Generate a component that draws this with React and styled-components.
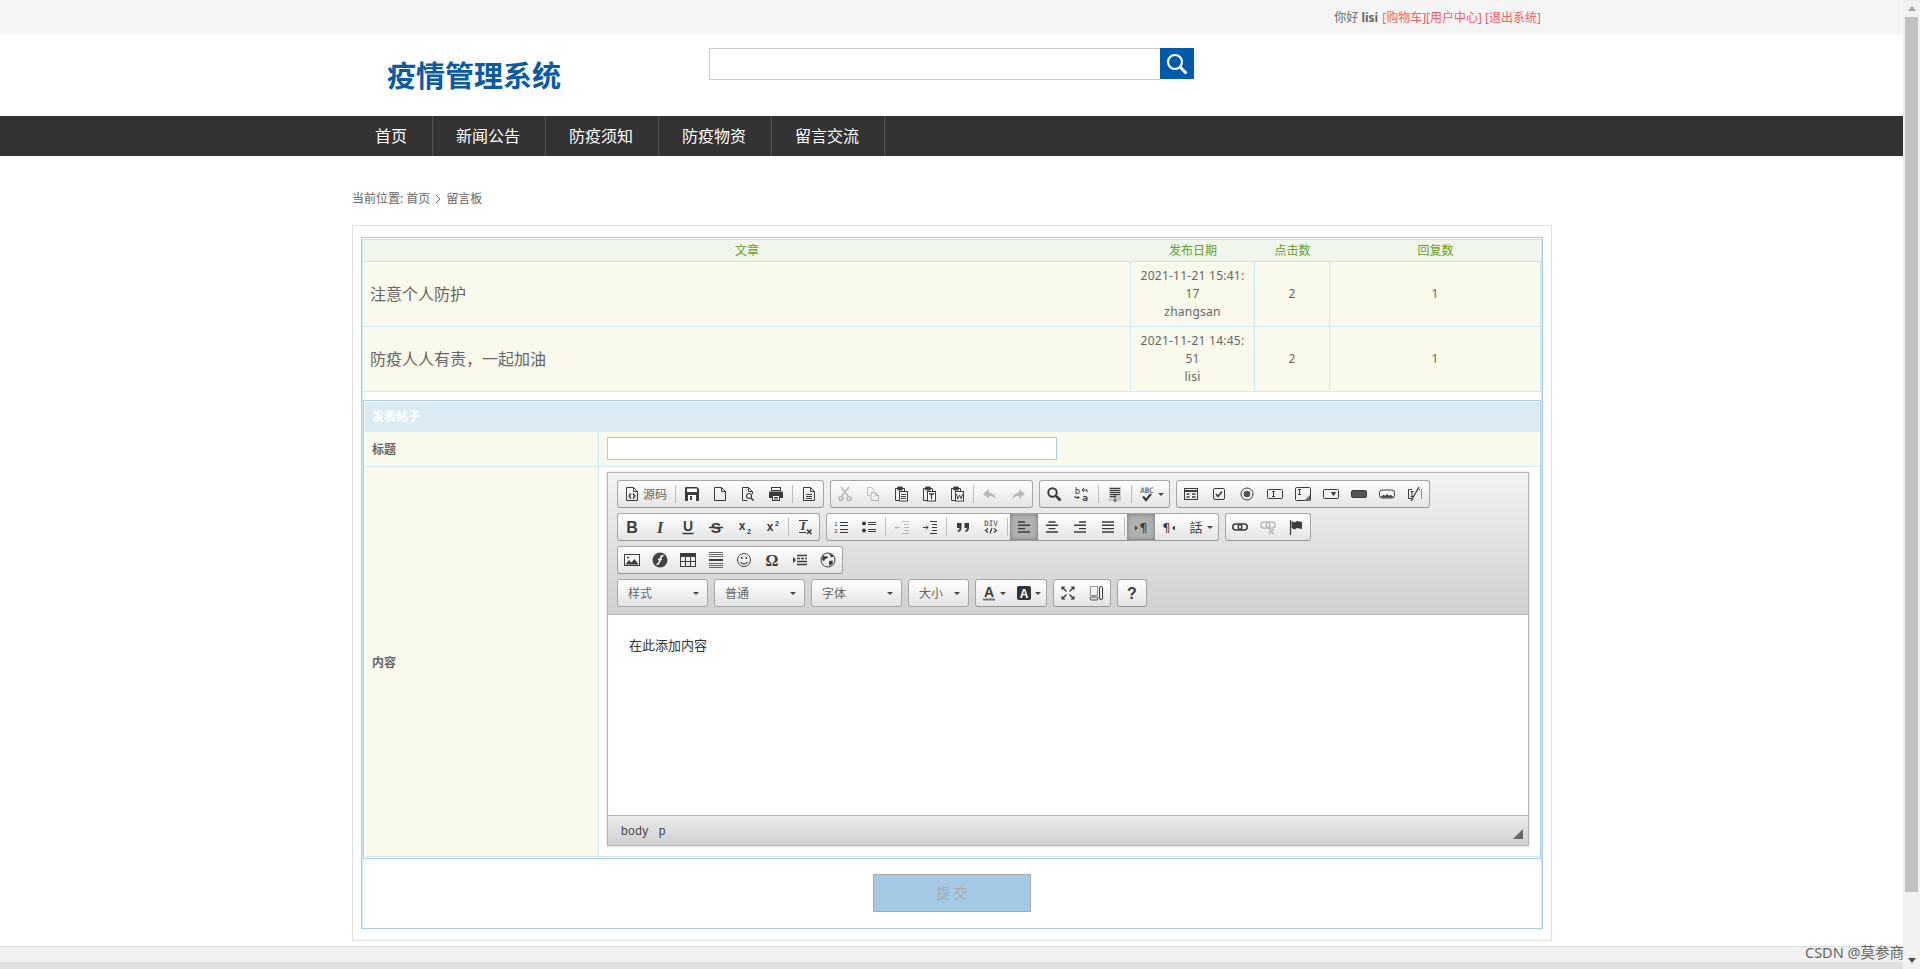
import styled, { createGlobalStyle } from "styled-components"

const GlobalStyle = createGlobalStyle`
  * {
    box-sizing: border-box;
  }
  html, body {
    margin: 0;
    padding: 0;
    height: 100%;
    overflow: hidden;
    background: #fff;
    font-family: "Noto Sans", "Noto Sans CJK SC", sans-serif;
    font-size: 12px;
    color: #666;
  }
`

const Screen = styled.div`
  position: relative;
  display: flex;
  width: 1920px;
  height: 969px;
  overflow: hidden;
`
const Page = styled.div`
  width: 1903px;
  height: 969px;
  display: flex;
  flex-direction: column;
`
const Scrollbar = styled.div`
  width: 17px;
  height: 969px;
  background: #f1f1f1;
  display: flex;
  flex-direction: column;
  align-items: center;
`
const ScrollUp = styled.div`
  height: 17px;
  display: flex;
  align-items: center;
  justify-content: center;
  &::before {
    content: "";
    border: 4px solid transparent;
    border-top: 0;
    border-bottom: 5px solid #a3a3a3;
  }
`
const ScrollThumb = styled.div`
  width: 13px;
  height: 875px;
  background: #c1c1c1;
`
const ScrollDown = styled.div`
  margin-top: auto;
  height: 17px;
  display: flex;
  align-items: center;
  justify-content: center;
  &::before {
    content: "";
    border: 4px solid transparent;
    border-bottom: 0;
    border-top: 5px solid #505050;
  }
`
const Watermark = styled.div`
  position: absolute;
  left: 1805px;
  top: 942px;
  font-size: 14.5px;
  line-height: 20px;
  color: #666;
  white-space: nowrap;
`

const TopBar = styled.div`
  height: 34px;
  background: #f5f5f5;
`
const Wrap = styled.div`
  width: 1200px;
  margin-left: 352px;
`
const TopLinks = styled(Wrap)`
  height: 34px;
  padding-right: 11px;
  display: flex;
  justify-content: flex-end;
  align-items: center;
  gap: 4px;
  font-size: 12px;
  b {
    font-weight: 700;
  }
`
const RedLinks = styled.span`
  color: #ff5a60;
`

const Header = styled(Wrap)`
  height: 82px;
  display: flex;
  align-items: flex-start;
`
const Logo = styled.div`
  width: 357px;
  padding: 22px 0 0 35px;
  font-size: 29px;
  line-height: 40px;
  font-weight: 700;
  color: #0b5aa6;
  white-space: nowrap;
`
const SearchInput = styled.div`
  width: 451px;
  height: 32px;
  margin-top: 14px;
  border: 1px solid #ccc;
  border-right: 0;
`
const SearchButton = styled.div`
  width: 34px;
  height: 31px;
  margin-top: 14px;
  background: #0059ab;
  display: flex;
  align-items: center;
  justify-content: center;
`

const NavBar = styled.div`
  height: 40px;
  background: #333;
`
const NavList = styled(Wrap)`
  display: flex;
`
const NavItem = styled.div`
  height: 40px;
  padding: 0 25px 0 23px;
  border-right: 1px solid #555;
  color: #fff;
  font-size: 16px;
  line-height: 40px;
`

const Crumb = styled(Wrap)`
  height: 69px;
  padding-top: 34px;
  font-size: 12px;
  line-height: 18px;
  color: #666;
  display: flex;
  align-items: flex-start;
  svg {
    margin: 4px 5px 0 5px;
  }
`

const Panel = styled(Wrap)`
  height: 716px;
  border: 1px solid #e0e0e0;
  padding: 11px 8px;
`
const OuterBox = styled.div`
  width: 1182px;
  height: 692px;
  border: 1px solid #a8cce6;
  padding: 1px;
  box-shadow: inset 1px 0 0 #cfe9f5, inset -1px 0 0 #cfe9f5;
`
const DataTable = styled.table`
  width: 1178px;
  table-layout: fixed;
  border-collapse: separate;
  border-spacing: 0;
  border-top: 1px solid #bfe0f0;
  display: block;
`
const HeadCell = styled.th`
  height: 22px;
  padding: 0 0 1px;
  width: ${(p) => p.$w}px;
  background: #f0f6ec;
  border-bottom: 1px solid #d8e6c8;
  color: #66a01e;
  font-size: 12px;
  font-weight: 400;
  text-align: center;
`
const Cell = styled.td`
  height: 65px;
  padding: 0;
  background: #f9f9ec;
  border-bottom: 1px solid #cfe9f5;
  border-right: 1px solid #cfe9f5;
  font-size: 12px;
  line-height: 18px;
  letter-spacing: 0.25px;
  color: #666;
  text-align: center;
`
const TitleCell = styled(Cell)`
  padding-left: 7px;
  text-align: left;
  font-size: 16px;
  line-height: 24px;
  letter-spacing: 0;
`

const FormBox = styled.div`
  width: 1178px;
  margin-top: 8px;
  border: 1px solid #a8cce6;
  padding: 1px;
`
const FormHead = styled.div`
  height: 30px;
  background: #dcebf3;
  color: #fff;
  font-weight: 700;
  font-size: 12px;
  line-height: 30px;
  padding-left: 7px;
`
const FormRow = styled.div`
  display: grid;
  grid-template-columns: 234px 940px;
  height: ${(p) => p.$h}px;
  border-bottom: 1px solid #cfe9f5;
`
const FormLabel = styled.div`
  background: #f9f9ec;
  border-right: 1px solid #cfe9f5;
  padding-left: 7px;
  display: flex;
  align-items: center;
  font-weight: 700;
  font-size: 12px;
  color: #666;
`
const FormValue = styled.div`
  padding: 5px 8px 0;
  background: ${(p) => (p.$plain ? "#fff" : "#f9f9ec")};
`
const TitleInput = styled.div`
  width: 450px;
  height: 23px;
  background: #fff;
  border: 1px solid #a8cce6;
`

const Editor = styled.div`
  width: 922px;
  height: 374px;
  border: 1px solid #b6b6b6;
  box-shadow: 0 0 3px rgba(0, 0, 0, 0.15);
  display: flex;
  flex-direction: column;
  background: #fff;
`
const Toolbar = styled.div`
  height: 142px;
  padding: 7px 9px;
  border-bottom: 1px solid #b6b6b6;
  background: linear-gradient(#f2f2f2, #cfd1cf);
  display: flex;
  flex-direction: column;
  gap: 5px;
`
const ToolRow = styled.div`
  display: flex;
  gap: 6px;
  height: 28px;
`
const Group = styled.div`
  display: flex;
  height: 28px;
  border: 1px solid #a6a6a6;
  border-bottom-color: #979797;
  border-radius: 3px;
  background: linear-gradient(#fff, #e4e4e4);
  overflow: hidden;
`
const ToolButton = styled.div`
  width: ${(p) => p.$w || 28}px;
  height: 26px;
  display: flex;
  align-items: center;
  justify-content: center;
  gap: 3px;
  flex: none;
  font-size: 12px;
  color: #666;
  svg {
    opacity: ${(p) => (p.$off ? 0.3 : 1)};
  }
  ${(p) => p.$on && "background: #b0b0b0; box-shadow: inset 0 0 4px #6f6f6f;"}
`
const Arrow = styled.span`
  flex: none;
  border: 3px solid transparent;
  border-bottom: 0;
  border-top: 3px solid #474747;
`
const Sep = styled.span`
  width: 1px;
  height: 18px;
  margin: 4px 2px;
  background: #bcbcbc;
  flex: none;
`
const Combo = styled.div`
  width: ${(p) => p.$w}px;
  height: 28px;
  padding: 0 8px 0 10px;
  border: 1px solid #a6a6a6;
  border-radius: 3px;
  background: linear-gradient(#fff, #e4e4e4);
  display: flex;
  align-items: center;
  justify-content: space-between;
  font-size: 12px;
  color: #666;
`
const EditArea = styled.div`
  height: 201px;
  padding: 21px 0 0 21px;
  font-size: 13px;
  line-height: 18px;
  color: #333;
  border-bottom: 1px solid #b6b6b6;
`
const StatusBar = styled.div`
  height: 29px;
  flex: none;
  padding: 0 5px 0 13px;
  background: linear-gradient(#ebebeb, #cfd1cf);
  display: flex;
  align-items: center;
  gap: 10px;
  font-family: "Liberation Sans", sans-serif;
  font-size: 12px;
  letter-spacing: 0.4px;
  color: #484848;
`
const Resize = styled.span`
  margin: 7px 0 0 auto;
  width: 0;
  height: 0;
  border-left: 10px solid transparent;
  border-bottom: 10px solid #666;
`

const SubmitRow = styled.div`
  display: flex;
  justify-content: center;
  padding-top: 15px;
`
const Submit = styled.div`
  width: 158px;
  height: 38px;
  background: #a4cae6;
  border: 1px solid #aaa;
  color: #aaa;
  font-size: 14px;
  line-height: 36px;
  text-align: center;
`

const Footer = styled.div`
  margin-top: 5px;
  flex: 1;
  border-top: 1px solid #ddd;
  background: #f1f1f1;
  &::after {
    content: "";
    display: block;
    margin-top: 15px;
    height: 7px;
    background: #e0e0e0;
  }
`

const Svg = styled.svg.attrs({ viewBox: "0 0 16 16" })`
  width: 16px;
  height: 16px;
  flex: none;
  fill: none;
  stroke: #3c3c3c;
  stroke-width: 1;
  overflow: visible;
  text {
    stroke: none;
    fill: #3c3c3c;
  }
`

const dark = "#3c3c3c"
const Doc = () => <path d="M2.5 1.5h7l4 4v9h-11zM9.5 1.5v4h4" />
const Clip = ({ children }) => (
  <>
    <path d="M5 2.5H2.5v12H6M9 2.5h2.5V5" />
    <rect x="4.5" y="1" width="5" height="3" rx="1" fill={dark} />
    <rect x="6.5" y="5.5" width="8" height="9.5" fill="#fff" />
    {children}
  </>
)
const Small = ({ x = 8, y = 13, size = 7, weight = 700, family = "Liberation Sans", style, children }) => (
  <text x={x} y={y} fontSize={size} fontWeight={weight} fontFamily={family} fontStyle={style} textAnchor="middle">
    {children}
  </text>
)

const icons = {
  source: <><Doc /><path d="M7 7.5L5 10l2 2.5M9 7.5l2 2.5-2 2.5" strokeWidth="1.3" /></>,
  save: <><path fill={dark} d="M1 2a1 1 0 0 1 1-1h11l2 2v11a1 1 0 0 1-1 1H2a1 1 0 0 1-1-1z" stroke="none" /><rect x="3" y="2.5" width="10" height="3.5" fill="#fff" stroke="none" /><rect x="4" y="9" width="8" height="6" fill="#fff" stroke="none" /><rect x="6" y="10" width="2" height="4" fill={dark} stroke="none" /></>,
  newpage: <Doc />,
  preview: <><path d="M12.5 8V5.5h-4v-4M12.5 5.5l-4-4h-6v13h5" /><circle cx="9" cy="10" r="2.5" strokeWidth="1.2" /><path d="M11 12l2.5 2.5" strokeWidth="1.6" /></>,
  print: <><rect x="3.5" y="1.5" width="9" height="3" /><path fill={dark} stroke="none" d="M1 5.5h14V12h-3V9.5H4V12H1z" /><rect x="4.5" y="9.5" width="7" height="5" fill="#fff" /><path d="M6 11.5h4M6 13h4" /></>,
  templates: <><Doc /><path d="M5 8.5h6M5 10.5h6M5 12.5h6" /></>,
  cut: <><path d="M4 1l7 9M12 1l-7 9" strokeWidth="1.8" /><circle cx="4" cy="12.5" r="2" strokeWidth="1.6" /><circle cx="12" cy="12.5" r="2" strokeWidth="1.6" /></>,
  copy: <><path d="M2.5 1.5h4l2 2v2M2.5 1.5v8h3" /><path d="M6 6.5h4.5l3 3v5H6zM10.5 6.5v3h3" /></>,
  paste: <Clip><path d="M8 8.5h5M8 10.5h5M8 12.5h5" /></Clip>,
  pastetext: <Clip><path d="M8 8h5M10.5 8v5.5" strokeWidth="1.3" /></Clip>,
  pasteword: <Clip><path d="M7.5 8l1.2 5 1.8-4 1.8 4 1.2-5" /></Clip>,
  undo: <path fill={dark} stroke="none" d="M7 3L1 8l6 5v-3c3 0 5 1 7 3-1-4-3-6-7-6.5z" />,
  redo: <path fill={dark} stroke="none" d="M9 3l6 5-6 5v-3c-3 0-5 1-7 3 1-4 3-6 7-6.5z" />,
  find: <><circle cx="6.5" cy="6.5" r="4.2" strokeWidth="2" /><path d="M10 10l4.5 4.5" strokeWidth="2.6" /></>,
  replace: <><Small x="3.5" y="8" size="9" weight="400" family="DejaVu Sans Mono">b</Small><Small x="11" y="14.5" size="9.5" weight="700" family="DejaVu Sans Mono">a</Small><path d="M8 4l2-2M8 4l2 2M8 4h5v2M1 10v1.5h4M5 11.5l-1.5-1.5M5 11.5L3.5 13" /></>,
  selectall: <><rect x="2" y="1" width="12" height="14" fill="#c9c9c9" stroke="none" /><path d="M3 2.5h10M3 4.5h10M3 6.5h10M3 8.5h10M3 10.5h5" strokeWidth="1.1" /><path d="M8 10v5M6.5 10h3M6.5 15h3" /></>,
  spell: <><Small x="8" y="7" size="7.5" weight="400" family="DejaVu Sans Mono">ABC</Small><path d="M4 10.5l3 3.5 5-6" strokeWidth="2.2" /></>,
  form: <><rect x="1.5" y="2.5" width="13" height="11" /><path d="M2 5h12" strokeWidth="2" /><path d="M3.5 8h3M3.5 11h3M9 8h3.5M9 11h3.5" strokeWidth="1.3" /></>,
  checkbox: <><rect x="2.5" y="2.5" width="11" height="11" rx="1.5" /><path d="M5 8l2 2.5L11 5.5" strokeWidth="1.6" /></>,
  radio: <><circle cx="8" cy="8" r="6" /><circle cx="8" cy="8" r="3.3" fill="#555" stroke="none" /></>,
  textfield: <><rect x="0.5" y="3.5" width="15" height="9" rx="1" /><path d="M5 5.5h3M5 10.5h3M6.5 5.5v5" /></>,
  textarea: <><rect x="0.5" y="1.5" width="15" height="13" rx="1" /><path d="M3 3.5h3M3 8.5h3M4.5 3.5v5" /><path d="M15 9v6H9z" fill="#666" stroke="none" /></>,
  select: <><rect x="0.5" y="3.5" width="15" height="9" rx="1" /><path d="M8.5 6.5h4l-2 3z" fill={dark} /></>,
  button: <rect x="0.5" y="4.5" width="15" height="7" rx="1.5" fill="#555" />,
  imagebutton: <><rect x="0.5" y="4" width="15" height="8" rx="2.5" /><path d="M2.5 11l2-2 1.5 1.5L8 8.5l2 2 1.5-1.5 2 2z" fill={dark} /></>,
  hiddenfield: <><path d="M5 3.5H1.5v9H6M3.5 5.5h3M3.5 10.5h3M5 5.5v5" /><path d="M4 15l8-14" strokeWidth="1.3" /><path d="M14.5 3.5v9M10 3.5h4" strokeDasharray="1 1" /></>,
  bold: <Small y="14" size="16" family="Liberation Sans">B</Small>,
  italic: <Small y="14" size="16" style="italic" family="Liberation Serif">I</Small>,
  underline: <><Small y="11.5" size="14" family="Liberation Sans">U</Small><path d="M2.5 14.5h11" strokeWidth="1.5" /></>,
  strike: <><Small y="13.5" size="15.5" family="Liberation Sans">S</Small><path d="M1 8.5h14" strokeWidth="1.3" /></>,
  sub: <><Small x="6" y="11" size="12">x</Small><Small x="13" y="15" size="7">2</Small></>,
  sup: <><Small x="6" y="12" size="12">x</Small><Small x="13" y="7" size="7">2</Small></>,
  clear: <><Small x="6" y="11" size="13" style="italic" family="Liberation Serif">I</Small><path d="M2 1.5h9M2 13.5h7" strokeWidth="1.2" /><path d="M10 10.5l4.5 4.5M14.5 10.5L10 15" strokeWidth="1.5" /></>,
  numlist: <><Small x="3" y="7" size="6" weight="400">1</Small><Small x="3" y="14" size="6" weight="400">2</Small><path d="M7 3.5h8M7 6.5h8M7 10.5h8M7 13.5h8" /></>,
  bullet: <><circle cx="3" cy="4.5" r="2" fill={dark} stroke="none" /><circle cx="3" cy="11.5" r="2" fill={dark} stroke="none" /><path d="M7 3.5h8M7 5.5h8M7 10.5h8M7 12.5h8" /></>,
  outdent: <><path d="M8 2.5h7M10 5.5h5M10 8.5h5M10 11.5h5M8 14.5h7" /><path d="M6 8.5H1M3 6.5l-2 2 2 2" /></>,
  indent: <><path d="M8 2.5h7M10 5.5h5M10 8.5h5M10 11.5h5M8 14.5h7" /><path d="M1 8.5h5M4 6.5l2 2-2 2" /></>,
  quote: <path fill={dark} stroke="none" d="M2 4h4.5v4.5c0 2.5-1 4-3.5 4.5l-.5-1.2C4 11.3 4.5 10.500 4.500 9H2zM9.500 4H14v4.500c0 2.500-1 4-3.500 4.500l-.5-1.200c1.500-.5 2-1.300 2-2.800H9.500z" />,
  div: <><Small x="8" y="7" size="7.5" weight="400" family="DejaVu Sans Mono">DIV</Small><path d="M5 9.500l-2.500 2 2.500 2M11 9.500l2.500 2-2.500 2M9 9l-2 5.500" strokeWidth="1.2" /></>,
  left: <path d="M2 3h7M2 6.300h12M2 9.600h7M2 13h12" strokeWidth="1.4" />,
  center: <path d="M4.500 3h7M2 6.300h12M4.500 9.600h7M2 13h12" strokeWidth="1.4" />,
  right: <path d="M7 3h7M2 6.300h12M7 9.600h7M2 13h12" strokeWidth="1.4" />,
  justify: <path d="M2 3h12M2 6.300h12M2 9.600h12M2 13h12" strokeWidth="1.4" />,
  ltr: <><Small x="10.500" y="13" size="13" weight="400" family="DejaVu Sans">¶</Small><path d="M2 6.500l3 2.500-3 2.500z" fill={dark} stroke="none" /></>,
  rtl: <><Small x="5.500" y="13" size="13" weight="400" family="DejaVu Sans">¶</Small><path d="M14 6.500L11 9l3 2.500z" fill={dark} stroke="none" /></>,
  lang: <Small x="8" y="12.500" size="13" weight="400" family="Noto Sans CJK TC">話</Small>,
  link: <><rect x="0.800" y="5" width="9" height="6" rx="3" strokeWidth="1.5" /><rect x="6.200" y="5" width="9" height="6" rx="3" strokeWidth="1.5" /></>,
  unlink: <><rect x="0.800" y="3" width="9" height="6" rx="3" strokeWidth="1.5" /><rect x="6.200" y="3" width="9" height="6" rx="3" strokeWidth="1.5" /><path d="M9 10l5 5M14 10l-5 5" strokeWidth="1.5" /></>,
  anchor: <><path d="M2.500 1v15" strokeWidth="1.2" /><path d="M3.500 2l3 1.500L9 2l5 1v7l-5-1-2.500 1.500-3-1.500z" fill={dark} stroke="none" /></>,
  image: <><rect x="0.500" y="2.500" width="15" height="11" /><path d="M1.500 12.500L5 8l2.500 2.500L10.500 7l4 5.500z" fill={dark} stroke="none" /><circle cx="4" cy="5.500" r="1" fill={dark} stroke="none" /></>,
  flash: <><circle cx="8" cy="8" r="7.500" fill="#444" stroke="none" /><path d="M11.500 3.500C8.500 3.500 8.500 6 8 8s-1 4.500-3.500 4.500M6 7.500h4" stroke="#fff" strokeWidth="1.5" /></>,
  table: <><rect x="0.500" y="1.500" width="15" height="13" /><path d="M1 2h14v3H1z" fill={dark} stroke="none" /><path d="M5.500 5v9M10.500 5v9M1 9.500h14" /></>,
  hr: <><path d="M1 0.500h14M1 2.500h14M1 4.500h14M1 11.500h14M1 13.500h14M1 15.500h14" stroke="#666" /><path d="M1 8h14" strokeWidth="2" /></>,
  smiley: <><circle cx="8" cy="8" r="6.500" /><circle cx="5.700" cy="6" r="1" fill={dark} stroke="none" /><circle cx="10.300" cy="6" r="1" fill={dark} stroke="none" /><path d="M4.500 10c1.500 2.500 5.500 2.500 7 0" strokeWidth="1.2" /></>,
  omega: <Small x="8" y="14" size="16" family="Liberation Serif">Ω</Small>,
  pagebreak: <><path d="M1 5l3 3-3 3z" fill={dark} stroke="none" /><path d="M5 3.500h10M5 12.500h10" strokeWidth="1.4" /><path d="M5 6.500h3M9 6.500h3M13 6.500h2M5 9.500h10" strokeWidth="1.5" /></>,
  iframe: <><circle cx="8" cy="8" r="7" /><path d="M3 3.500l2 1 2-.5 1 2-3 1-1 2.500-2-2zM9 2l3 .5 1.500 2-2 1zM9 9l3.500-.5.5 2.500-3 3-1-2z" fill={dark} stroke="none" /></>,
  textcolor: <><Small y="11.500" size="14" family="Liberation Sans">A</Small><path d="M2 14.500h12" stroke="#777" strokeWidth="2" /></>,
  bgcolor: <><rect x="1" y="1" width="14" height="14" rx="2" fill="#333" stroke="none" /><text x="8" y="13" fontSize="12" fontWeight="700" textAnchor="middle" fontFamily="Liberation Sans" style={{ fill: "#fff" }}>A</text></>,
  maximize: <><path d="M1.500 1.500h4l-4 4zM14.500 1.500h-4l4 4zM1.500 14.500h4l-4-4zM14.500 14.500h-4l4-4z" fill={dark} stroke="none" /><path d="M3 3l3.500 3.500M13 3L9.500 6.500M3 13l3.500-3.500M13 13L9.500 9.500" strokeWidth="1.4" /></>,
  blocks: <><path d="M2.500 1.500h7v9h-7z" strokeDasharray="1 1" /><rect x="2" y="12" width="8" height="3" rx="1.500" /><rect x="11.500" y="1.500" width="3" height="13" rx="1.500" /></>,
  help: <Small y="14" size="16" family="Liberation Sans">?</Small>,
}

// "name" is a button, "|" a separator, ":off" greyed, ":on" pressed, ":arrow" with a small dropdown arrow
const toolRows = [
  [
    ["source", "|", "save", "newpage", "preview", "print", "|", "templates"],
    ["cut:off", "copy:off", "paste", "pastetext", "pasteword", "|", "undo:off", "redo:off"],
    ["find", "replace", "|", "selectall", "|", "spell:arrow"],
    ["form", "checkbox", "radio", "textfield", "textarea", "select", "button", "imagebutton", "hiddenfield"],
  ],
  [
    ["bold", "italic", "underline", "strike", "sub", "sup", "|", "clear"],
    ["numlist", "bullet", "|", "outdent:off", "indent", "|", "quote", "div", "|", "left:on", "center", "right", "justify", "|", "ltr:on", "rtl", "lang:arrow"],
    ["link", "unlink:off", "anchor"],
  ],
  [["image", "flash", "table", "hr", "smiley", "omega", "pagebreak", "iframe"]],
]
const bottomRow = [
  ["textcolor:arrow", "bgcolor:arrow"],
  ["maximize", "blocks"],
  ["help"],
]

function Tool({ spec }) {
  if (spec === "|") return <Sep />
  const [name, flag] = spec.split(":")
  const glyph = <Svg>{icons[name]}</Svg>
  if (name === "source") {
    return (
      <ToolButton $w={55}>
        {glyph}
        源码
      </ToolButton>
    )
  }
  return (
    <ToolButton $w={flag === "arrow" ? 35 : 28} $off={flag === "off"} $on={flag === "on"}>
      {glyph}
      {flag === "arrow" && <Arrow />}
    </ToolButton>
  )
}

function ToolGroup({ items }) {
  return (
    <Group>
      {items.map((spec, i) => (
        <Tool key={i} spec={spec} />
      ))}
    </Group>
  )
}

const posts = [
  { title: "注意个人防护", date: "2021-11-21 15:41:", sec: "17", user: "zhangsan" },
  { title: "防疫人人有责，一起加油", date: "2021-11-21 14:45:", sec: "51", user: "lisi" },
]

export default function App() {
  return (
    <Screen>
      <GlobalStyle />
      <Page>
        <TopBar>
          <TopLinks>
            <span>
              你好 <b>lisi</b>
            </span>
            <RedLinks>[购物车][用户中心] [退出系统]</RedLinks>
          </TopLinks>
        </TopBar>
        <Header>
          <Logo>疫情管理系统</Logo>
          <SearchInput />
          <SearchButton>
            <svg width="24" height="24" viewBox="0 0 24 24" fill="none" stroke="#fff">
              <circle cx="10" cy="10" r="7" strokeWidth="2.2" />
              <path d="M15 15l6.500 6.500" strokeWidth="3" />
            </svg>
          </SearchButton>
        </Header>
        <NavBar>
          <NavList>
            {["首页", "新闻公告", "防疫须知", "防疫物资", "留言交流"].map((t) => (
              <NavItem key={t}>{t}</NavItem>
            ))}
          </NavList>
        </NavBar>
        <Crumb>
          当前位置: 首页
          <svg width="6" height="10" viewBox="0 0 6 10" fill="none" stroke="#666">
            <path d="M1 1l4 4-4 4" />
          </svg>
          留言板
        </Crumb>
        <Panel>
          <OuterBox>
            <DataTable>
              <thead>
                <tr>
                  <HeadCell $w={768}>文章</HeadCell>
                  <HeadCell $w={124}>发布日期</HeadCell>
                  <HeadCell $w={75}>点击数</HeadCell>
                  <HeadCell $w={211}>回复数</HeadCell>
                </tr>
              </thead>
              <tbody>
                {posts.map((p) => (
                  <tr key={p.title}>
                    <TitleCell>{p.title}</TitleCell>
                    <Cell>
                      {p.date}
                      <br />
                      {p.sec}
                      <br />
                      {p.user}
                    </Cell>
                    <Cell>2</Cell>
                    <Cell>1</Cell>
                  </tr>
                ))}
              </tbody>
            </DataTable>
            <FormBox>
              <FormHead>发表帖子</FormHead>
              <FormRow $h={35}>
                <FormLabel>标题</FormLabel>
                <FormValue>
                  <TitleInput />
                </FormValue>
              </FormRow>
              <FormRow $h={390}>
                <FormLabel>内容</FormLabel>
                <FormValue $plain>
                  <Editor>
                    <Toolbar>
                      {toolRows.map((row, i) => (
                        <ToolRow key={i}>
                          {row.map((items, j) => (
                            <ToolGroup key={j} items={items} />
                          ))}
                        </ToolRow>
                      ))}
                      <ToolRow>
                        <Combo $w={91}>样式<Arrow /></Combo>
                        <Combo $w={91}>普通<Arrow /></Combo>
                        <Combo $w={91}>字体<Arrow /></Combo>
                        <Combo $w={61}>大小<Arrow /></Combo>
                        {bottomRow.map((items, j) => (
                          <ToolGroup key={j} items={items} />
                        ))}
                      </ToolRow>
                    </Toolbar>
                    <EditArea>在此添加内容</EditArea>
                    <StatusBar>
                      <span>body</span>
                      <span>p</span>
                      <Resize />
                    </StatusBar>
                  </Editor>
                </FormValue>
              </FormRow>
            </FormBox>
            <SubmitRow>
              <Submit>提 交</Submit>
            </SubmitRow>
          </OuterBox>
        </Panel>
        <Footer />
      </Page>
      <Scrollbar>
        <ScrollUp />
        <ScrollThumb />
        <ScrollDown />
      </Scrollbar>
      <Watermark>CSDN @莫参商</Watermark>
    </Screen>
  )
}
